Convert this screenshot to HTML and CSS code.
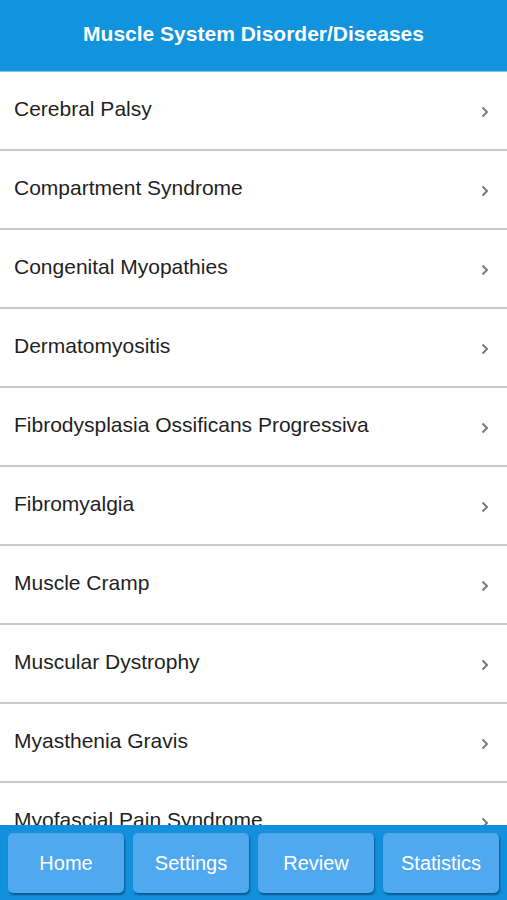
FILE: index.html
```html
<!DOCTYPE html>
<html>
<head>
<meta charset="utf-8">
<link rel="stylesheet" href="styles.css">
</head>
<body>
<div class="app">
  <header class="topbar">Muscle System Disorder/Diseases</header>
  <ul class="list">
    <li class="row"><span>Cerebral Palsy</span><svg class="chev" viewBox="0 0 8 12"><path d="M1.5 1.5 L6 6 L1.5 10.5"/></svg></li>
    <li class="row"><span>Compartment Syndrome</span><svg class="chev" viewBox="0 0 8 12"><path d="M1.5 1.5 L6 6 L1.5 10.5"/></svg></li>
    <li class="row"><span>Congenital Myopathies</span><svg class="chev" viewBox="0 0 8 12"><path d="M1.5 1.5 L6 6 L1.5 10.5"/></svg></li>
    <li class="row"><span>Dermatomyositis</span><svg class="chev" viewBox="0 0 8 12"><path d="M1.5 1.5 L6 6 L1.5 10.5"/></svg></li>
    <li class="row"><span>Fibrodysplasia Ossificans Progressiva</span><svg class="chev" viewBox="0 0 8 12"><path d="M1.5 1.5 L6 6 L1.5 10.5"/></svg></li>
    <li class="row"><span>Fibromyalgia</span><svg class="chev" viewBox="0 0 8 12"><path d="M1.5 1.5 L6 6 L1.5 10.5"/></svg></li>
    <li class="row"><span>Muscle Cramp</span><svg class="chev" viewBox="0 0 8 12"><path d="M1.5 1.5 L6 6 L1.5 10.5"/></svg></li>
    <li class="row"><span>Muscular Dystrophy</span><svg class="chev" viewBox="0 0 8 12"><path d="M1.5 1.5 L6 6 L1.5 10.5"/></svg></li>
    <li class="row"><span>Myasthenia Gravis</span><svg class="chev" viewBox="0 0 8 12"><path d="M1.5 1.5 L6 6 L1.5 10.5"/></svg></li>
    <li class="row"><span>Myofascial Pain Syndrome</span><svg class="chev" viewBox="0 0 8 12"><path d="M1.5 1.5 L6 6 L1.5 10.5"/></svg></li>
  </ul>
  <nav class="tabbar">
    <button class="tab">Home</button>
    <button class="tab">Settings</button>
    <button class="tab">Review</button>
    <button class="tab">Statistics</button>
  </nav>
</div>
</body>
</html>
```
FILE: styles.css
```css
* { box-sizing: border-box; }
html, body { margin: 0; padding: 0; }
body {
  font-family: "Liberation Sans", Arial, sans-serif;
  background: #ffffff;
}
.app {
  width: 507px;
  height: 900px;
  display: flex;
  flex-direction: column;
  overflow: hidden;
}
.topbar {
  height: 72px;
  flex: none;
  background: #1193dd;
  border-bottom: 1px solid #7cc3ee;
  color: #ffffff;
  font-size: 21px;
  font-weight: bold;
  display: flex;
  align-items: center;
  justify-content: center;
  padding-bottom: 4px;
}
.list {
  list-style: none;
  margin: 0;
  padding: 0;
  flex: 1;
  overflow: hidden;
}
.row {
  height: 79px;
  border-bottom: 2px solid #c9c9c9;
  display: flex;
  align-items: center;
  justify-content: space-between;
  padding: 0 18px 4px 14px;
  font-size: 21px;
  color: #1f1f1f;
}
.chev {
  width: 8px;
  height: 12px;
  fill: none;
  stroke: #7a7a7a;
  stroke-width: 2;
  margin-top: 6px;
}
.tabbar {
  height: 75px;
  flex: none;
  background: #1290db;
  display: flex;
  gap: 9px;
  padding: 8px 8px 7px 8px;
}
.tab {
  flex: 1;
  border: none;
  border-radius: 5px;
  background: #50a8ee;
  color: #ffffff;
  font-family: "Liberation Sans", Arial, sans-serif;
  font-size: 20px;
  box-shadow: 1px 2px 2px rgba(0, 40, 90, 0.55);
  padding: 0;
}
```
